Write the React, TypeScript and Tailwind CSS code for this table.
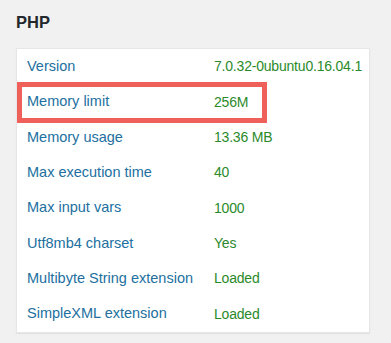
import React from "react";

const rows: [string, string][] = [
  ["Version", "7.0.32-0ubuntu0.16.04.1"],
  ["Memory limit", "256M"],
  ["Memory usage", "13.36 MB"],
  ["Max execution time", "40"],
  ["Max input vars", "1000"],
  ["Utf8mb4 charset", "Yes"],
  ["Multibyte String extension", "Loaded"],
  ["SimpleXML extension", "Loaded"],
];

export default function App() {
  return (
    <div
      className="w-[391px] h-[343px] bg-[#f1f1f1] pl-4 pr-[21px] pt-[12px]"
      style={{ fontFamily: '"Liberation Sans", Arial, sans-serif' }}
    >
      <h2 className="text-[16.5px] font-bold text-[#23282d] leading-[20px] h-[36px]">PHP</h2>
      <div className="relative bg-white border border-[#e6e6e6] shadow-[0_1px_1px_rgba(0,0,0,0.06)]">
        {rows.map(([label, value]) => (
          <div key={label} className="flex items-center h-[35.375px]">
            <div className="w-[197px] pl-[10px] text-[14.5px] text-[#22709f]">{label}</div>
            <div className="text-[14px] text-[#2b8a2b] tracking-[-0.2px]">{value}</div>
          </div>
        ))}
        <div className="absolute left-[0px] top-[33px] w-[250px] h-[41px] border-[5px] border-[#f0605a]" />
      </div>
    </div>
  );
}
